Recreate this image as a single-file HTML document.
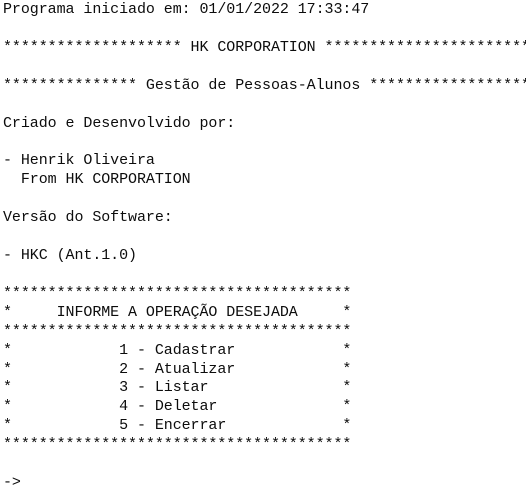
<!DOCTYPE html>
<html><head><meta charset="utf-8"><style>
html,body{margin:0;padding:0;background:#fff;width:526px;height:504px;overflow:hidden}
pre{margin:0;position:absolute;left:3px;top:1px;font-family:"Liberation Mono",monospace;font-size:15px;letter-spacing:-0.07px;line-height:18.92px;color:#0c0c0c;white-space:pre}
</style></head><body><pre>Programa iniciado em: 01/01/2022 17:33:47

******************** HK CORPORATION ************************

*************** Gestão de Pessoas-Alunos ********************

Criado e Desenvolvido por:

- Henrik Oliveira
  From HK CORPORATION

Versão do Software:

- HKC (Ant.1.0)

***************************************
*     INFORME A OPERAÇÃO DESEJADA     *
***************************************
*            1 - Cadastrar            *
*            2 - Atualizar            *
*            3 - Listar               *
*            4 - Deletar              *
*            5 - Encerrar             *
***************************************

-&gt;</pre></body></html>
